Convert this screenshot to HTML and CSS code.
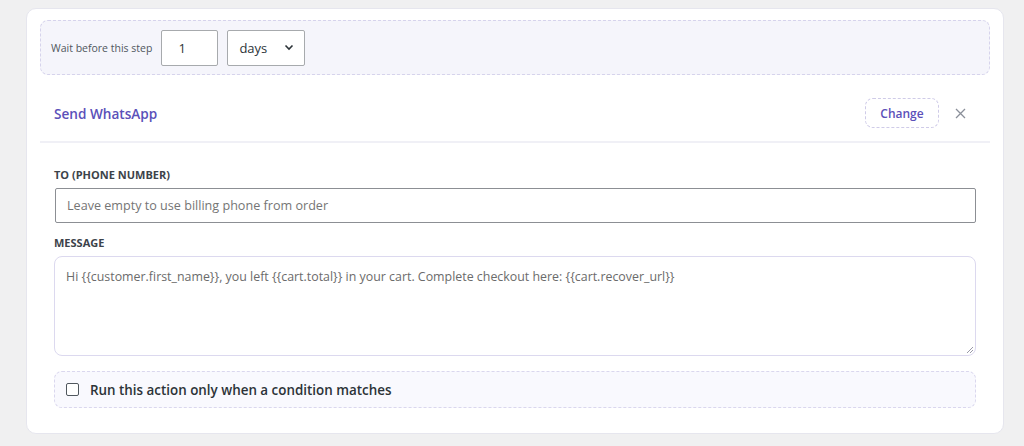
FILE: index.html
```html
<!DOCTYPE html>
<html lang="en">
<head>
  <meta charset="UTF-8" />
  <title>Send WhatsApp step</title>
  <link rel="stylesheet" href="styles.css">
</head>
<body>
  <div class="card">
    <div class="wait">
      <span class="wait-label">Wait before this step</span>
      <input class="wait-num" type="text" value="1">
      <div class="wait-unit">
        <span>days</span>
        <svg width="10" height="7" viewBox="0 0 10 7"><path d="M1.5 1.5 L5 5 L8.5 1.5" fill="none" stroke="#2c3338" stroke-width="1.6"/></svg>
      </div>
    </div>

    <div class="action-head">
      <span class="action-title">Send WhatsApp</span>
      <button class="change-btn">Change</button>
      <svg class="close" width="11" height="11" viewBox="0 0 11 11"><path d="M1 1 L10 10 M10 1 L1 10" stroke="#8a8f99" stroke-width="1.3"/></svg>
    </div>

    <div class="action-body">
      <label class="field-label">TO (PHONE NUMBER)</label>
      <div class="text-input">Leave empty to use billing phone from order</div>

      <label class="field-label second">MESSAGE</label>
      <div class="textarea">Hi {{customer.first_name}}, you left {{cart.total}} in your cart. Complete checkout here: {{cart.recover_url}}
        <svg class="grip" width="9" height="9" viewBox="0 0 9 9"><path d="M8 2 L2 8 M8 5 L5 8" stroke="#9a9aa8" stroke-width="1"/></svg>
      </div>

      <div class="condition">
        <span class="check"></span>
        <span class="condition-text">Run this action only when a condition matches</span>
      </div>
    </div>
  </div>
</body>
</html>
```

FILE: styles.css
```css
html, body {
  margin: 0;
  padding: 0;
}

body {
  background: #f0f0f1;
  font-family: "Open Sans", "Noto Sans", sans-serif;
  color: #2c3338;
  padding: 8px 20px 0 26px;
}

.card {
  width: 978px;
  height: 426px;
  box-sizing: border-box;
  background: #fff;
  border: 1px solid #e6e6ee;
  border-radius: 10px;
  padding: 11px 13px 0 13px;
}

.wait {
  height: 55px;
  box-sizing: border-box;
  display: flex;
  align-items: center;
  gap: 9px;
  padding-left: 10px;
  background: #f5f5fb;
  border: 1px dashed #d6d3ec;
  border-radius: 8px;
}

.wait-label {
  font-size: 10.5px;
  color: #50575e;
}

.wait-num {
  width: 57px;
  height: 36px;
  box-sizing: border-box;
  border: 1px solid #a7aaad;
  border-radius: 2px;
  font-family: inherit;
  font-size: 13px;
  color: #2c3338;
  padding: 0 0 0 16px;
  margin: 0;
}

.wait-unit {
  width: 78px;
  height: 36px;
  box-sizing: border-box;
  border: 1px solid #a7aaad;
  border-radius: 2px;
  display: flex;
  align-items: center;
  justify-content: space-between;
  padding: 0 10px 0 11px;
  font-size: 13px;
  background: #fff;
}

.action-head {
  display: flex;
  align-items: center;
  padding: 23px 24px 13px 14px;
  border-bottom: 2px solid #f0f0f6;
}

.action-title {
  flex: 1;
  font-size: 13.6px;
  font-weight: 600;
  color: #5b50b9;
}

.change-btn {
  height: 30px;
  width: 74px;
  background: #fff;
  border: 1px dashed #cfcbe8;
  border-radius: 8px;
  font-family: inherit;
  font-size: 12px;
  font-weight: 600;
  color: #5b50b9;
  padding: 0;
  margin-right: 16px;
}

.close {
  display: block;
}

.action-body {
  padding: 25px 14px 0 14px;
}

.field-label {
  display: block;
  font-size: 11px;
  font-weight: 700;
  line-height: 14px;
  color: #3c434a;
  margin-bottom: 6px;
}

.field-label.second {
  margin-top: 13px;
}

.text-input {
  height: 35px;
  box-sizing: border-box;
  margin-left: 1px;
  border: 1px solid #8c8f94;
  border-radius: 2px;
  padding: 0 11px;
  font-size: 12.6px;
  line-height: 33px;
  color: #757575;
}

.textarea {
  position: relative;
  height: 100px;
  box-sizing: border-box;
  border: 1px solid #dcd9ef;
  border-radius: 8px;
  padding: 11px 11px;
  font-size: 12.4px;
  line-height: 18px;
  color: #6b6b6b;
}

.grip {
  position: absolute;
  right: 1px;
  bottom: 1px;
}

.condition {
  margin-top: 15px;
  height: 37px;
  box-sizing: border-box;
  display: flex;
  align-items: center;
  gap: 11px;
  padding-left: 11px;
  background: #f9f9fe;
  border: 1px dashed #dad7ee;
  border-radius: 8px;
}

.check {
  width: 13px;
  height: 13px;
  box-sizing: border-box;
  border: 1.5px solid #50575e;
  border-radius: 2px;
  background: #fff;
}

.condition-text {
  font-size: 13.4px;
  font-weight: 600;
  color: #2c3338;
}
```
